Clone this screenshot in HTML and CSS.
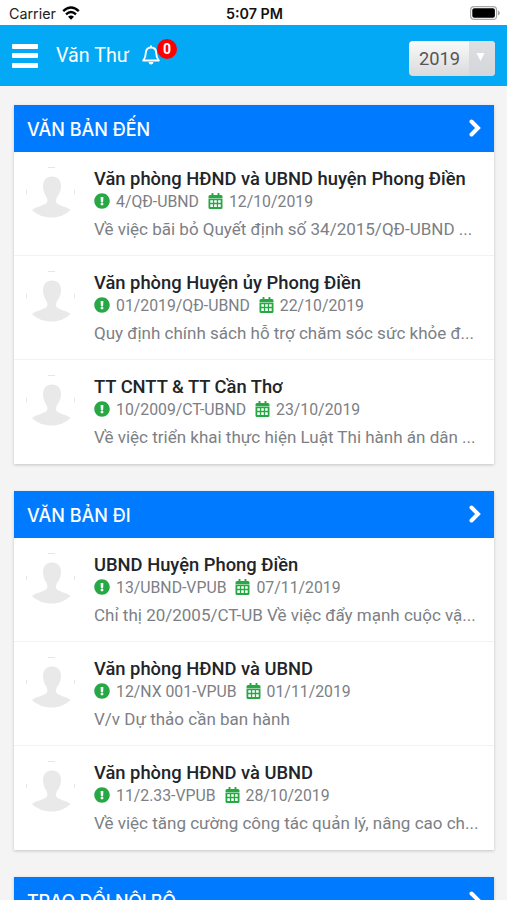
FILE: index.html
```
<!DOCTYPE html>
<html lang="vi">
<head>
<meta charset="utf-8" />
<meta name="viewport" content="width=device-width, initial-scale=1.0"/>
<title>Văn Thư</title>
<link rel="stylesheet" href="styles.css">
</head>

<body>
<svg class="icons">
	<symbol id="person" viewBox="0 0 50 51">
		<path d="M26 9.500c6 0 9 4 9 9.500 0 5-2 8-4 11-1 2-1.500 5 0 6.500 3 2.500 9 3 13.500 6.500-5 5-12 7.500-19 7.500S11 48 6 43c4.500-3.500 10.500-4 14-6.500 2-1.500 1.500-4.500.500-6.500-2-3-3.500-6-3.500-11 0-5.500 3-9.500 9-9.500z" fill="#e9e9e9"/>
		<path d="M22 .5h7M.5 23v4M48.500 23v4" stroke="#e6e6e6" fill="none"/>
	</symbol>
	<symbol id="info" viewBox="0 0 512 512">
		<path fill="#28a745" d="M504 256c0 136.997-111.043 248-248 248S8 392.997 8 256C8 119.083 119.043 8 256 8s248 111.083 248 248zm-248 50c-25.405 0-46 20.595-46 46s20.595 46 46 46 46-20.595 46-46-20.595-46-46-46zm-43.673-165.346l7.418 136c.347 6.364 5.609 11.346 11.982 11.346h48.546c6.373 0 11.635-4.982 11.982-11.346l7.418-136c.375-6.874-5.098-12.654-11.982-12.654h-63.383c-6.884 0-12.356 5.78-11.981 12.654z"/>
	</symbol>
	<symbol id="calendar" viewBox="0 0 14 16">
		<path fill="#28a745" d="M1.500 2H3V.4Q3 0 3.400 0h1.200Q5 0 5 .4V2h4V.4Q9 0 9.400 0h1.200q.4 0 .4.400V2h1.500Q14 2 14 3.500V5H0V3.500Q0 2 1.500 2zM0 5.500h14v9q0 1.500-1.500 1.500h-11Q0 16 0 14.500z"/>
		<path fill="#fff" d="M1.800 7.200h2.600v2.600H1.800zM5.700 7.200h2.600v2.600H5.700zM9.600 7.200h2.600v2.600H9.600zM1.800 11.300h2.600v2.600H1.800zM5.700 11.300h2.600v2.600H5.700zM9.600 11.300h2.600v2.600H9.600z"/>
	</symbol>
	<symbol id="chevron" viewBox="0 0 12 18">
		<path d="M2.500 2.500L9 9l-6.500 6.500" fill="none" stroke="#fff" stroke-width="4" stroke-linecap="round"/>
	</symbol>
</svg>

<div id="status">
	<div class="carrier">Carrier
		<svg class="wifi" viewBox="0 0 18 14">
			<path d="M1.200 5.200Q9-2 16.800 5.200M4 8.300q5-4.400 10 0" fill="none" stroke="#000" stroke-width="2.400"/>
			<path d="M9 13.800L6 10.700q3-2.400 6 0z"/>
		</svg>
	</div>
	<div class="time">5:07 PM</div>
	<svg class="battery" viewBox="0 0 30 14">
		<rect x=".6" y=".6" width="26" height="12.800" rx="3.500" fill="#fff" stroke="#a8a8a8" stroke-width="1.200"/>
		<rect x="2.300" y="2.300" width="22.600" height="9.400" rx="2"/>
		<path d="M28 4.500q2 1 2 2.500t-2 2.500z" fill="#a8a8a8"/>
	</svg>
</div>

<div id="hd">
	<div class="menu"><i></i><i></i><i></i></div>
	<h1>Văn Thư</h1>
	<div class="bell">
		<svg viewBox="0 0 18 20">
			<path d="M9 2.500c-3.600 0-5.200 2.500-5.200 5.500 0 4-1 5.500-2.600 7.500h15.600c-1.600-2-2.600-3.500-2.600-7.500 0-3-1.600-5.500-5.200-5.500zM9 .5v2" fill="none" stroke="#fff" stroke-width="1.900" stroke-linejoin="round"/>
			<path d="M6.500 17h5q-.4 2.500-2.500 2.500T6.500 17z" fill="#fff"/>
		</svg>
		<span class="badge">0</span>
	</div>
	<div class="year"><span>2019</span><b><svg viewBox="0 0 8 8"><path d="M0 0h8L4 8z" fill="#fff"/></svg></b></div>
</div>

<div id="bd">
	<div class="card">
		<h2>VĂN BẢN ĐẾN<svg><use href="#chevron"/></svg></h2>
		<ul>
			<li>
				<svg class="avatar"><use href="#person"/></svg>
				<div>
					<h3>Văn phòng HĐND và UBND huyện Phong Điền</h3>
					<p class="meta"><svg class="info"><use href="#info"/></svg><span>4/QĐ-UBND</span><svg class="cal"><use href="#calendar"/></svg><span>12/10/2019</span></p>
					<p class="desc">Về việc bãi bỏ Quyết định số 34/2015/QĐ-UBND ...</p>
				</div>
			</li>
			<li>
				<svg class="avatar"><use href="#person"/></svg>
				<div>
					<h3>Văn phòng Huyện ủy Phong Điền</h3>
					<p class="meta"><svg class="info"><use href="#info"/></svg><span>01/2019/QĐ-UBND</span><svg class="cal"><use href="#calendar"/></svg><span>22/10/2019</span></p>
					<p class="desc">Quy định chính sách hỗ trợ chăm sóc sức khỏe đ...</p>
				</div>
			</li>
			<li>
				<svg class="avatar"><use href="#person"/></svg>
				<div>
					<h3>TT CNTT &amp; TT Cần Thơ</h3>
					<p class="meta"><svg class="info"><use href="#info"/></svg><span>10/2009/CT-UBND</span><svg class="cal"><use href="#calendar"/></svg><span>23/10/2019</span></p>
					<p class="desc">Về việc triển khai thực hiện Luật Thi hành án dân ...</p>
				</div>
			</li>
		</ul>
	</div>

	<div class="card">
		<h2>VĂN BẢN ĐI<svg><use href="#chevron"/></svg></h2>
		<ul>
			<li>
				<svg class="avatar"><use href="#person"/></svg>
				<div>
					<h3>UBND Huyện Phong Điền</h3>
					<p class="meta"><svg class="info"><use href="#info"/></svg><span>13/UBND-VPUB</span><svg class="cal"><use href="#calendar"/></svg><span>07/11/2019</span></p>
					<p class="desc">Chỉ thị 20/2005/CT-UB Về việc đẩy mạnh cuộc vậ...</p>
				</div>
			</li>
			<li>
				<svg class="avatar"><use href="#person"/></svg>
				<div>
					<h3>Văn phòng HĐND và UBND</h3>
					<p class="meta"><svg class="info"><use href="#info"/></svg><span>12/NX 001-VPUB</span><svg class="cal"><use href="#calendar"/></svg><span>01/11/2019</span></p>
					<p class="desc">V/v Dự thảo cần ban hành</p>
				</div>
			</li>
			<li>
				<svg class="avatar"><use href="#person"/></svg>
				<div>
					<h3>Văn phòng HĐND và UBND</h3>
					<p class="meta"><svg class="info"><use href="#info"/></svg><span>11/2.33-VPUB</span><svg class="cal"><use href="#calendar"/></svg><span>28/10/2019</span></p>
					<p class="desc">Về việc tăng cường công tác quản lý, nâng cao ch...</p>
				</div>
			</li>
		</ul>
	</div>

	<div class="card last">
		<h2>TRAO ĐỔI NỘI BỘ<svg><use href="#chevron"/></svg></h2>
	</div>
</div>
</body>
</html>
```
FILE: styles.css
```
* { margin:0; padding:0; box-sizing:border-box; }
body {
	height:900px;
	overflow:hidden;
	display:flex;
	flex-direction:column;
	background:#f4f4f4;
	font-family:Roboto, "Liberation Sans", sans-serif;
	color:#212529;
}
svg { display:block; flex:none; }
.icons { display:none; }

#status {
	flex:none;
	height:25px;
	padding:2px 7px 0 9px;
	display:grid;
	grid-template-columns:1fr auto 1fr;
	align-items:center;
	background:#fff;
	font-family:Inter, sans-serif;
	font-size:14.300px;
	color:#222;
}
.carrier { display:flex; align-items:center; gap:6px; }
.wifi { width:18px; height:14px; margin-top:-2px; }
.time { font-weight:600; color:#111; }
.battery { width:30px; height:14px; justify-self:end; margin-top:-2px; }

#hd {
	flex:none;
	height:61px;
	padding:0 12px;
	display:flex;
	align-items:center;
	background:#03a9f4;
	color:#fff;
}
.menu { width:26px; display:flex; flex-direction:column; gap:4.500px; }
.menu i { height:5px; border-radius:1px; background:#fff; }
#hd h1 { margin-left:18px; font-size:19.700px; font-weight:400; line-height:24px; }
.bell { position:relative; margin:-2px 0 0 13px; }
.bell svg { width:18px; height:20px; }
.badge {
	position:absolute;
	left:15px;
	top:-6px;
	width:20px;
	height:20px;
	border-radius:50%;
	background:#f00;
	text-align:center;
	font-size:14px;
	font-weight:700;
	line-height:20px;
}
.year {
	margin:6px 0 0 auto;
	width:86px;
	height:35px;
	border-radius:4px;
	overflow:hidden;
	display:flex;
	background:linear-gradient(#fafafa, #d9dadc);
	color:#555;
	font-size:18.300px;
	line-height:35px;
}
.year span { width:60px; padding-left:10px; }
.year b { flex:1; display:flex; align-items:center; justify-content:center; padding:0 3px 4px 0; background:linear-gradient(#dddfe2, #d3d6da); }
.year svg { width:9px; height:8px; }

#bd { padding:18.500px 13.500px 0 14px; }
.card {
	margin-bottom:27px;
	background:#fff;
	box-shadow:0 1px 3px rgba(0,0,0,.2);
}
.card h2 {
	height:47px;
	padding:2px 12.500px 0 13px;
	display:flex;
	align-items:center;
	justify-content:space-between;
	background:#007bff;
	color:#fff;
	font-family:Inter, sans-serif;
	font-size:18px;
	font-weight:500;
}
.card h2 svg { width:12px; height:18px; margin-top:-3px; }
.last h2 { letter-spacing:-.3px; }
.card ul { list-style:none; }
.card li { height:104px; padding:15.400px 12px 0 12px; display:flex; gap:18px; white-space:nowrap; border-bottom:1px solid #f2f2f5; }
.card li:last-child { border-bottom:0; }
.avatar { width:50px; height:51px; }
.card h3 { font-size:18.350px; font-weight:500; line-height:23px; }
.card p { color:#7c8085; }
.meta { display:flex; align-items:center; font-size:15.800px; line-height:23px; }
.info { width:16px; height:16px; margin-right:6px; }
.cal { width:15px; height:16px; margin:0 6px 0 9px; }
.desc { margin-top:4px; font-size:17px; line-height:24px; }
```
